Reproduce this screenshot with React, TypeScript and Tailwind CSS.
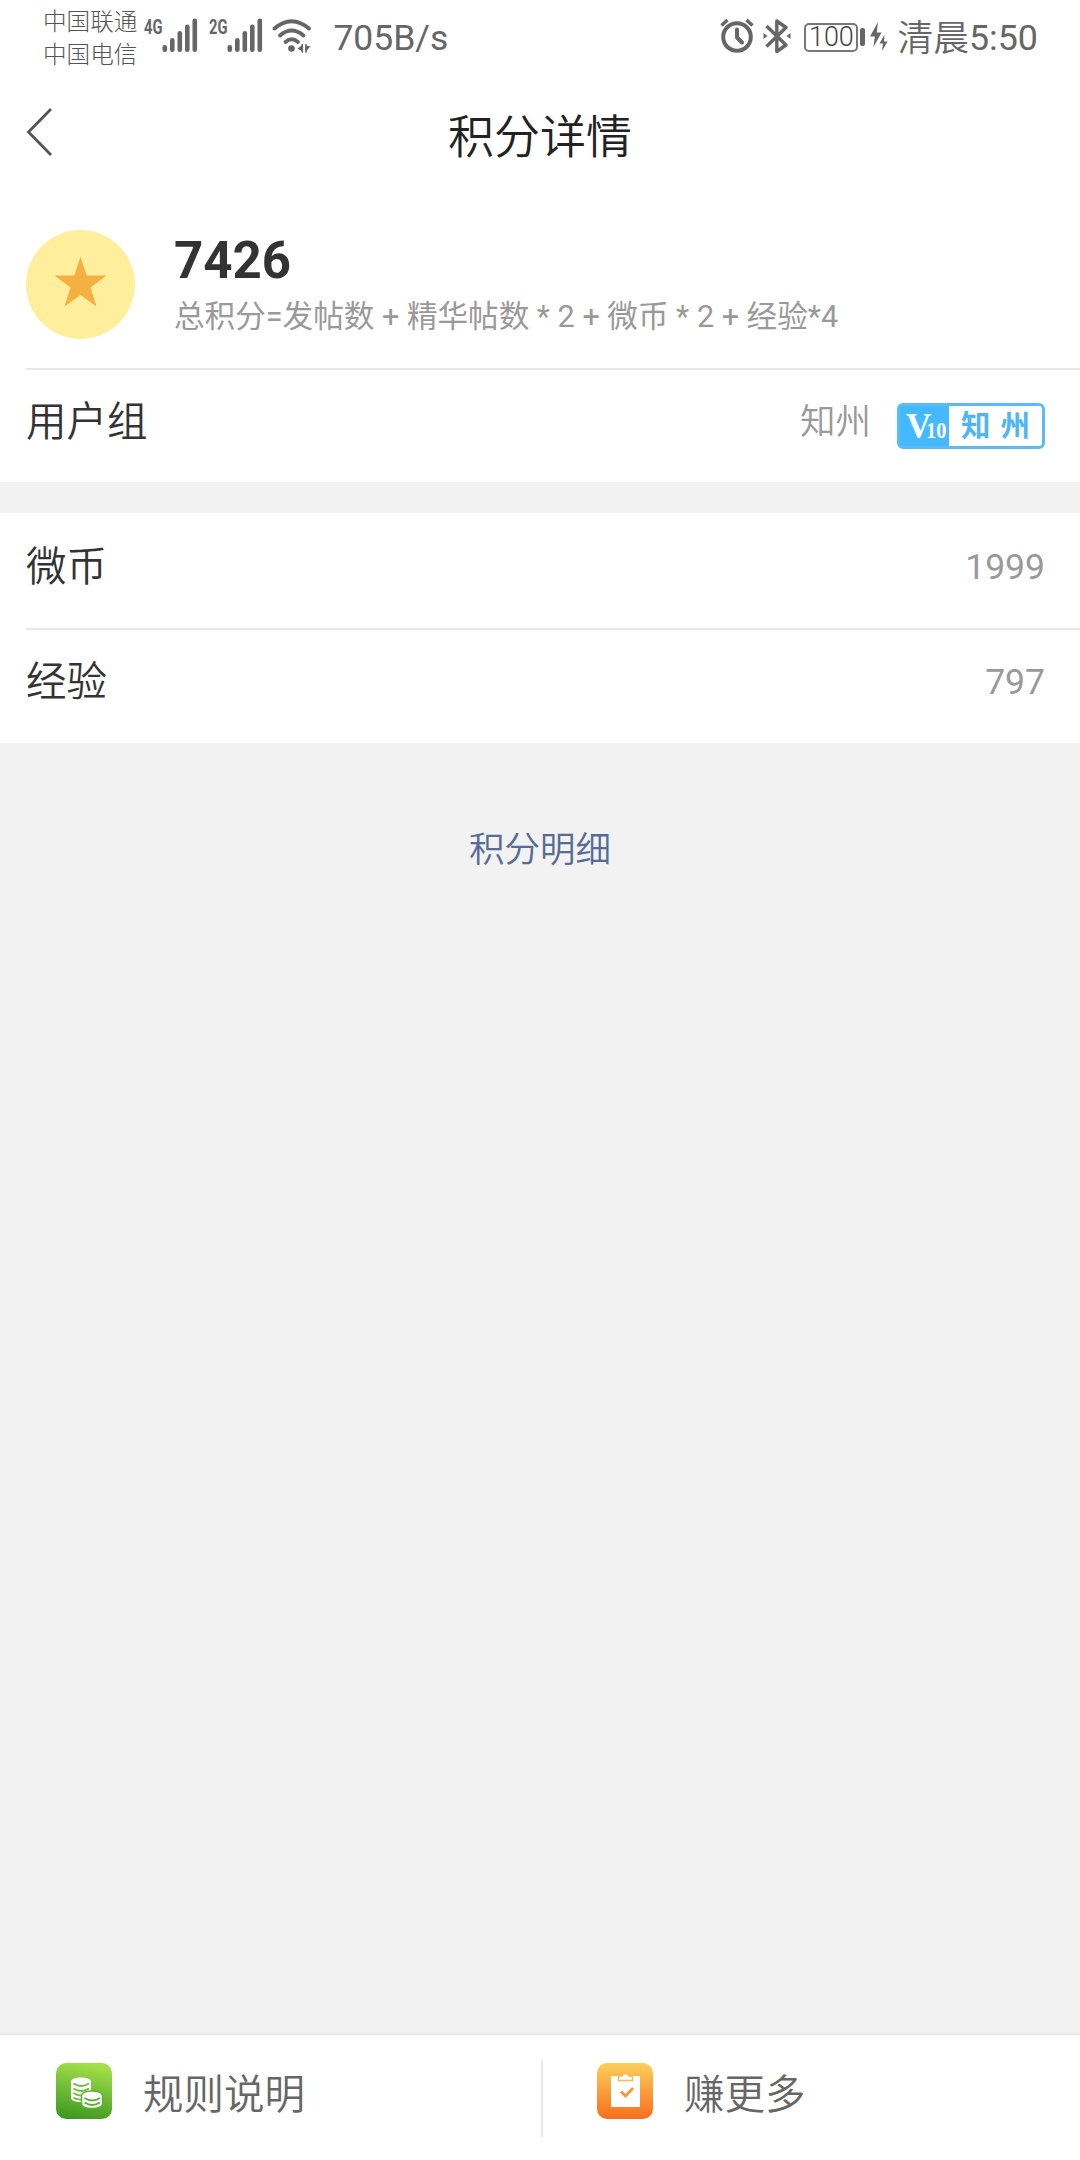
import React from "react";

interface RowProps {
  label: string;
  divider?: boolean;
  children: React.ReactNode;
}

const Signal = ({ type }: { type: string }) => (
  <svg width="54" height="44" viewBox="0 -8 54 44" fill="#666">
    <text
      x="0"
      y="15.5"
      fontSize="21"
      fontWeight="700"
      textLength="18.5"
      lengthAdjust="spacingAndGlyphs"
    >
      {type}
    </text>
    <rect x="18.5" y="27" width="4.6" height="7" rx="2.3" />
    <rect x="26" y="20" width="4.6" height="14" rx="2.3" />
    <rect x="33.5" y="13" width="4.6" height="21" rx="2.3" />
    <rect x="41" y="6.5" width="4.6" height="27.5" rx="2.3" />
    <rect x="48.5" y="0.5" width="4.6" height="33.5" rx="2.3" />
  </svg>
);

const Wifi = () => (
  <svg width="40" height="36" viewBox="0 0 40 36" fill="none" stroke="#666" strokeWidth="3.8" strokeLinecap="round">
    <path d="M2.5 10.5Q19.5 -4 37 10.5" />
    <path d="M8 17.5Q19.5 7.5 31.5 17.5" />
    <path d="M13.5 24Q19.5 18.5 26 24" />
    <circle cx="19.5" cy="30.5" r="3.3" fill="#666" stroke="none" />
    <path d="M25.5 30.5L31 26.5V34ZM38.5 28L33.5 34.5V28Z" fill="#666" stroke="none" />
    <path d="M30.3 26.5V34M34 26.5V34" strokeWidth="1.6" />
  </svg>
);

const Alarm = () => (
  <svg width="34" height="36" viewBox="0 0 34 36" fill="none" stroke="#666" strokeWidth="4">
    <circle cx="17" cy="19" r="13.8" />
    <path d="M17 11.5V19.5L22 24.5" strokeLinecap="round" strokeLinejoin="round" />
    <path d="M1.5 7.5L7.5 2M32.5 7.5L26.5 2" strokeWidth="3.4" />
  </svg>
);

const Bluetooth = () => (
  <svg width="28" height="36" viewBox="0 0 28 36" fill="none" stroke="#666" strokeWidth="3.4">
    <path d="M3.5 8L23 27L13.8 33.5V3L23 9.5L3.5 28.5" strokeLinejoin="round" />
    <path d="M0.5 15L4.5 18L0.5 21ZM27.5 15L23.5 18L27.5 21Z" fill="#666" stroke="none" />
  </svg>
);

const Battery = () => (
  <div className="flex items-center">
    <div className="flex h-[29px] w-[54px] items-center justify-center rounded-[5px] border-2 border-[#777] text-[27px] leading-none font-light text-[#444]">
      100
    </div>
    <div className="ml-[2px] h-[18px] w-[5px] rounded-[2px] bg-[#666]" />
    <svg className="ml-[5px]" width="19" height="32" viewBox="0 0 19 32" fill="#666">
      <path d="M8 1L0 15.5H4.8L3.5 26L11.5 11.5H6.8Z" />
      <path d="M14.5 13.5L9.5 22.5H13L12 30L17.5 20.5H14Z" />
    </svg>
  </div>
);

const StatusBar = () => (
  <div className="flex h-[76px] items-start justify-between pr-[42px] pl-[43px] text-[#666]">
    <div className="flex">
      <div className="pt-[6px] text-[23.6px] leading-[33px] font-light text-[#555]">
        <div>中国联通</div>
        <div>中国电信</div>
      </div>
      <div className="mt-[10px] ml-[7px] flex">
        <Signal type="4G" />
        <div className="ml-[11px]">
          <Signal type="2G" />
        </div>
        <div className="mt-[8px] ml-[9px]">
          <Wifi />
        </div>
      </div>
      <div className="ml-[21px] pt-[16px] text-[35.5px] leading-[44px]">705B/s</div>
    </div>
    <div className="flex">
      <div className="mt-[18px] flex">
        <Alarm />
        <div className="ml-[9px]">
          <Bluetooth />
        </div>
        <div className="mt-[3px] ml-[13px]">
          <Battery />
        </div>
      </div>
      <div className="ml-[8px] flex pt-[16px] text-[35.8px] leading-[44px]">
        <span className="pt-px font-[350]">清晨</span>
        <span>5:50</span>
      </div>
    </div>
  </div>
);

const Header = () => (
  <div className="grid h-[118px] grid-cols-[1fr_auto_1fr] items-center">
    <svg className="mb-[6px] ml-[26px]" width="28" height="48" viewBox="0 0 28 48" fill="none" stroke="#555" strokeWidth="2.8">
      <path d="M25 1L2.5 24L25 47" />
    </svg>
    <h1 className="mt-[3px] text-[46px] leading-[60px] font-[350] text-[#222]">积分详情</h1>
  </div>
);

const Row = ({ label, divider, children }: RowProps) => (
  <div className="pl-[26px]">
    <div
      className={
        divider
          ? "flex h-[117px] justify-between border-b-2 border-[#e8e8e8] pt-[25px] pr-[35px]"
          : "flex h-[113px] justify-between pt-[23px] pr-[35px]"
      }
    >
      <span className="text-[40.5px] leading-[58px] font-[350] text-[#333]">{label}</span>
      <div className="flex text-[35.5px] leading-[58px] text-[#999]">{children}</div>
    </div>
  </div>
);

const LevelBadge = () => (
  <div className="mt-[10px] ml-[26px] flex h-[46px] w-[148px] overflow-hidden rounded-[6px] border-[3px] border-[#5bbcf5] bg-[#45b9ff]">
    <div className="flex w-[49px] items-baseline pl-[6px] font-['Liberation_Serif',serif] font-bold text-white">
      <span className="text-[35px] leading-[42px]">V</span>
      <span className="-ml-[5px] origin-left scale-x-[0.85] text-[24px] leading-[42px]">10</span>
    </div>
    <div className="flex flex-1 justify-center gap-[10px] bg-white text-[29.5px] leading-[41px] font-bold text-[#4fb6f3]">
      <span>知</span>
      <span>州</span>
    </div>
  </div>
);

const RulesIcon = () => (
  <svg width="56" height="56" viewBox="0 0 56 56">
    <defs>
      <linearGradient id="green" x1="0.6" y1="0" x2="0.4" y2="1">
        <stop offset="0" stopColor="#a5e04a" />
        <stop offset="1" stopColor="#3f9a22" />
      </linearGradient>
    </defs>
    <rect width="56" height="56" rx="10" fill="url(#green)" />
    <path d="M15 18.5C15 13 35 13 35 18.5V35C35 40.5 15 40.5 15 35Z" fill="#fff" />
    <path
      d="M17.5 20.5Q25 25.5 33 20.5M17.5 25.5Q25 30.5 33 25.5M17.5 30Q22 33 26 32.5M17.5 34.5Q21 37 26 36.5"
      fill="none"
      stroke="#6bbd38"
      strokeWidth="1.8"
    />
    <path
      d="M25.5 32.5C25.5 26.5 46.5 26.5 46.5 32.5V41C46.5 47 25.5 47 25.5 41Z"
      fill="#fff"
      stroke="#5db034"
      strokeWidth="1.4"
    />
    <path d="M28.5 35Q36 40 44 35M28.5 39.5Q36 44.5 44 39.5" fill="none" stroke="#5db034" strokeWidth="1.8" />
  </svg>
);

const EarnIcon = () => (
  <svg width="56" height="56" viewBox="0 0 56 56">
    <defs>
      <linearGradient id="orange" x1="0" y1="0" x2="0" y2="1">
        <stop offset="0" stopColor="#fbd05a" />
        <stop offset="1" stopColor="#f96d1f" />
      </linearGradient>
    </defs>
    <rect width="56" height="56" rx="10" fill="url(#orange)" />
    <path d="M14 13H43V44H14Z" fill="#fff" />
    <path
      d="M21.5 17.5V14.5Q21.5 13 23 13H25Q25.5 10.5 28.5 10.5Q31.5 10.5 32 13H34Q35.5 13 35.5 14.5V17.5Z"
      fill="#fff"
      stroke="#fbb850"
      strokeWidth="1.4"
    />
    <path d="M24 28.5L28.5 33L36 25" fill="none" stroke="#fa9438" strokeWidth="2.8" />
  </svg>
);

const Footer = () => (
  <div className="flex h-[127px] border-t-2 border-[#e8e8e8] bg-white text-[40.5px] leading-[58px] font-[350] text-[#666]">
    <div className="flex w-[541px] pt-[28px] pl-[56px]">
      <RulesIcon />
      <span className="mt-[3px] ml-[31px]">规则说明</span>
    </div>
    <div className="mt-[25px] h-[77px] w-[2px] bg-[#e8e8e8]" />
    <div className="flex pt-[28px] pl-[54px]">
      <EarnIcon />
      <span className="mt-[3px] ml-[31px]">赚更多</span>
    </div>
  </div>
);

const App = () => {
  return (
    <div className="flex h-[2160px] w-[1080px] flex-col overflow-hidden bg-[#f2f2f2] font-[Roboto,'Noto_Sans_CJK_SC',sans-serif]">
      <div className="h-[482px] bg-white">
        <StatusBar />
        <Header />
        <div className="pl-[26px]">
          <div className="flex h-[176px] border-b-2 border-[#e8e8e8] pt-[36px]">
            <svg width="109" height="110" viewBox="0 0 109 110">
              <circle cx="54.5" cy="54.5" r="54.5" fill="#ffee9c" />
              <path
                d="M54.5 27L60.8 45.5H80.5L64.5 57.5L70.5 76.5L54.5 65L38.5 76.5L44.5 57.5L28.5 45.5H48.2Z"
                fill="#f4b041"
              />
            </svg>
            <div className="ml-[39px]">
              <div className="pt-px text-[51px] leading-[60px] font-bold text-[#333]">7426</div>
              <div className="mt-[4px] text-[30.6px] leading-[44px] text-[#999]">
                总积分=发帖数 + 精华帖数 * 2 + 微币 * 2 + 经验*4
              </div>
            </div>
          </div>
        </div>
        <Row label="用户组">
          <span className="font-[350]">知州</span>
          <LevelBadge />
        </Row>
      </div>

      <div className="mt-[31px] bg-white">
        <Row label="微币" divider>
          1999
        </Row>
        <Row label="经验">797</Row>
      </div>

      <div className="mt-[81px] text-center text-[35.5px] leading-[52px] font-[350] text-[#576b95]">积分明细</div>

      <div className="mt-auto">
        <Footer />
      </div>
    </div>
  );
};

export default App;
